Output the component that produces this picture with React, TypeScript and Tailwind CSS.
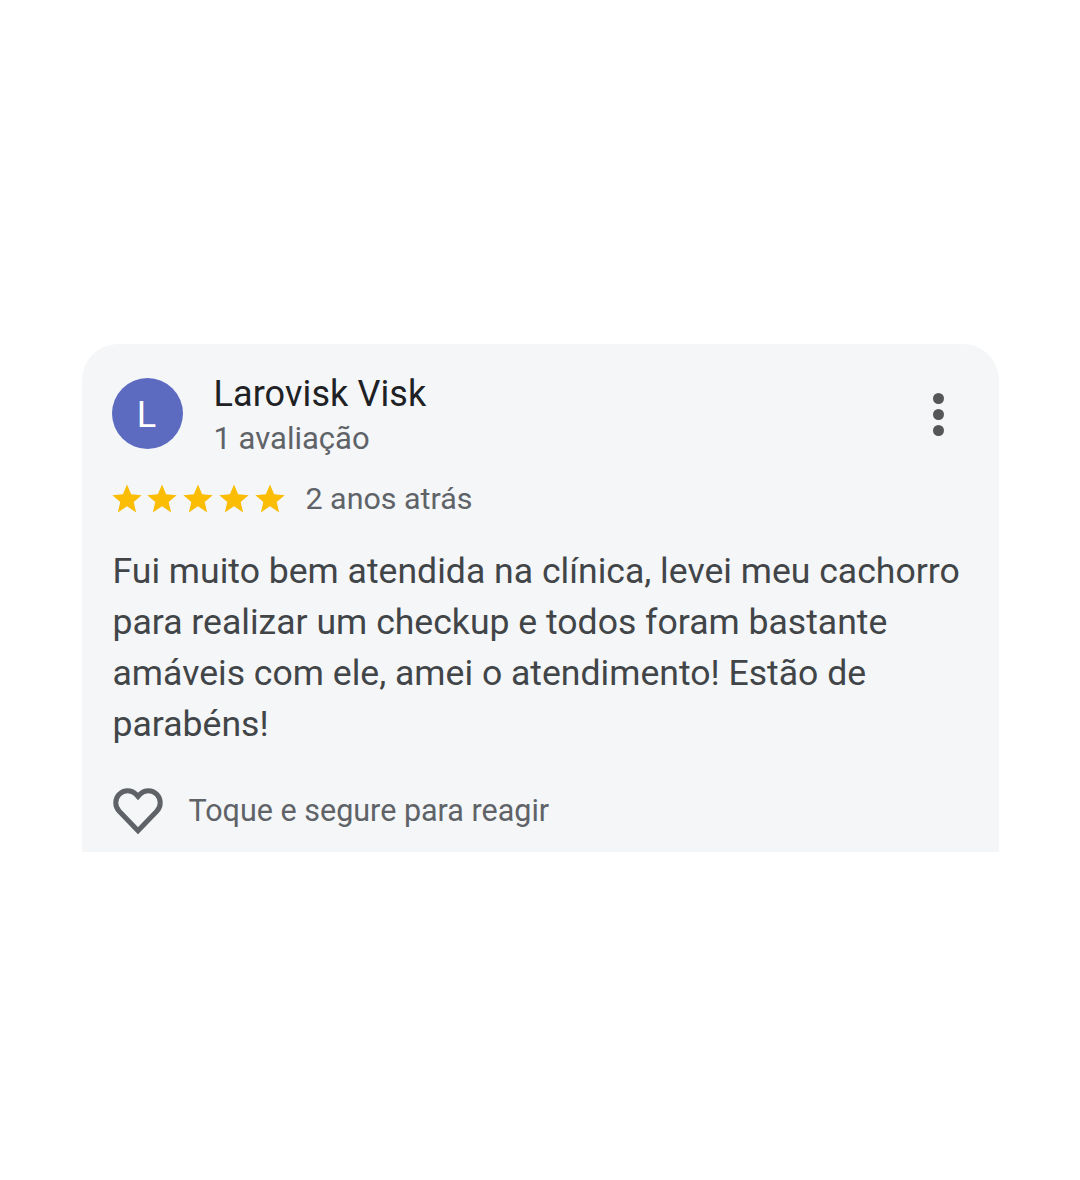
import React from "react";

function Star() {
  return (
    <svg width="32" height="31" viewBox="0 0 24 24" className="-mx-px shrink-0 block -mt-px">
      <path fill="#fbbc04" d="M12 1.2l3.2 7.6 8.1.7-6.1 5.3 1.9 8L12 18l-7.1 4.8 1.9-8L.7 9.5l8.1-.7z" />
    </svg>
  );
}

export default function App() {
  return (
    <div className="w-[1080px] h-[1180px] bg-white flex flex-col items-center pt-[344px]" style={{ fontFamily: "Roboto, sans-serif" }}>
      <div className="w-[917px] h-[508px] bg-[#f4f6f8] rounded-t-[36px] pl-[30px] pr-[30px] pt-[30px] flex flex-col">
        <div className="flex items-start justify-between">
          <div className="flex items-start gap-[31px]">
            <div className="mt-[4px] w-[71px] h-[71px] rounded-full bg-[#5c6bc0] flex items-center justify-center text-white text-[36px] leading-none pt-[3px] pr-px">L</div>
            <div className="flex flex-col">
              <span className="text-[36px] leading-[40px] text-[#202124] tracking-[0.1px]">Larovisk Visk</span>
              <span className="text-[31px] leading-[36px] mt-[7px] text-[#5f6368]">1 avaliação</span>
            </div>
          </div>
          <div className="flex flex-col gap-[5px] mt-[19px] mr-[25px]">
            <span className="w-[11px] h-[11px] rounded-full bg-[#545658]" />
            <span className="w-[11px] h-[11px] rounded-full bg-[#545658]" />
            <span className="w-[11px] h-[11px] rounded-full bg-[#545658]" />
          </div>
        </div>
        <div className="flex items-center mt-[24px] h-[36px]">
          <div className="flex w-[173px] justify-between"><Star /><Star /><Star /><Star /><Star /></div>
          <span className="ml-[21px] text-[30.4px] leading-[36px] text-[#5f6368]">2 anos atrás</span>
        </div>
        <p className="mt-[29px] text-[35.6px] leading-[51px] text-[#424548] w-[860px] pl-px">
          Fui muito bem atendida na clínica, levei meu cachorro para realizar um checkup e todos foram bastante amáveis com ele, amei o atendimento! Estão de parabéns!
        </p>
        <div className="flex items-center mt-[36px] gap-[24px] -ml-px">
          <svg width="54" height="48" viewBox="0 0 24 22" fill="none" stroke="#5f6368" strokeWidth="2.3"><path d="M12 20.5 3.4 11.6a5.6 5.6 0 0 1 0-7.8 5.4 5.4 0 0 1 7.7 0l.9 1 .9-1a5.4 5.4 0 0 1 7.7 0 5.6 5.6 0 0 1 0 7.8z" /></svg>
          <span className="text-[30.5px] leading-[36px] mt-[2px] text-[#5f6368]">Toque e segure para reagir</span>
        </div>
      </div>
    </div>
  );
}
